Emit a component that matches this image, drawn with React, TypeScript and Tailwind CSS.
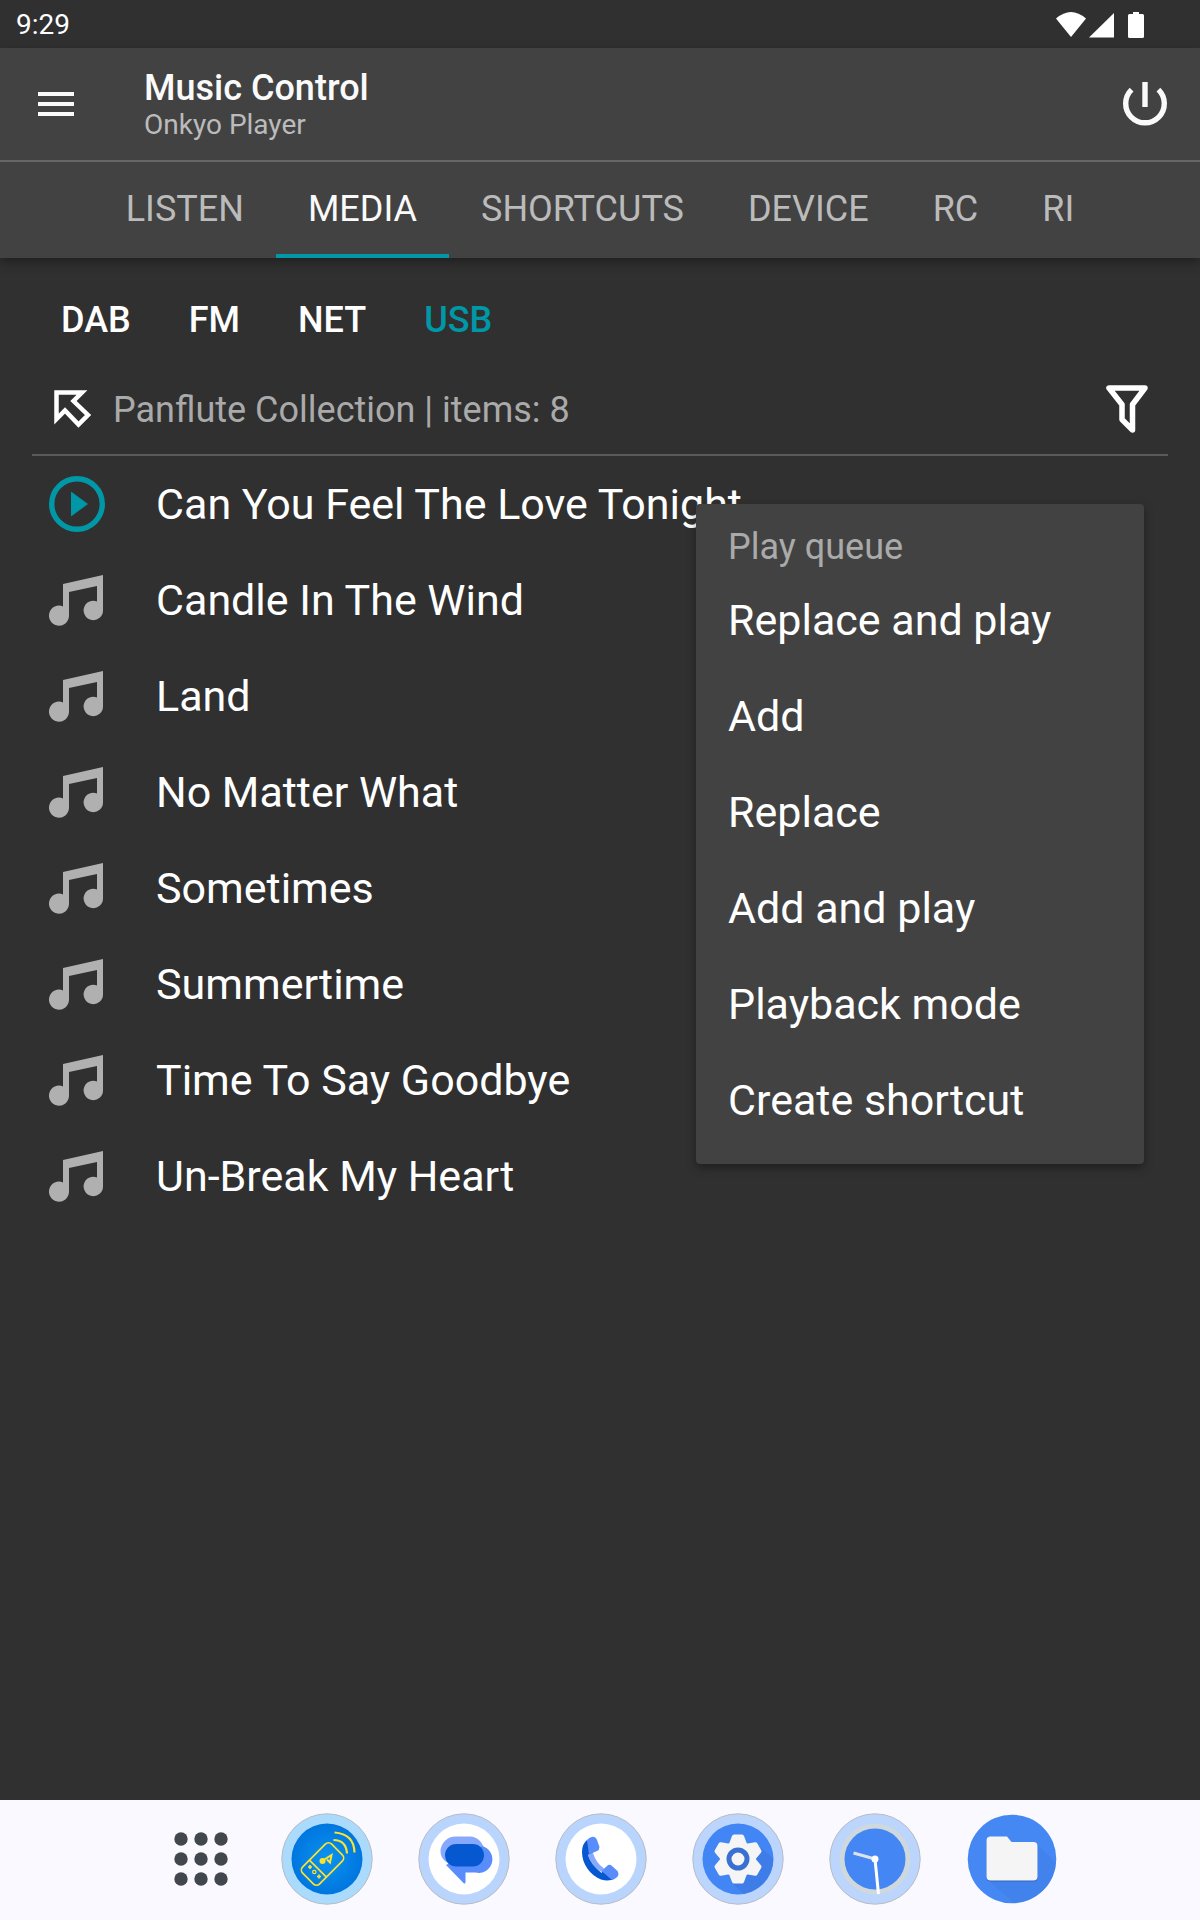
import React from "react";

const tabs = ["LISTEN", "MEDIA", "SHORTCUTS", "DEVICE", "RC", "RI"];
const sources = ["DAB", "FM", "NET", "USB"];
const songs = [
  "Can You Feel The Love Tonight",
  "Candle In The Wind",
  "Land",
  "No Matter What",
  "Sometimes",
  "Summertime",
  "Time To Say Goodbye",
  "Un-Break My Heart",
];
const actions = ["Replace and play", "Add", "Replace", "Add and play", "Playback mode", "Create shortcut"];

function StatusBar() {
  return (
    <div className="flex h-12 items-center justify-between pl-4 pr-14 pt-0.5 text-[28px] leading-8 text-white">
      <span>9:29</span>
      <svg width="88" height="26" viewBox="0 0 88 26" fill="#fff" aria-hidden="true">
        <path d="M0 6.500Q15-6.500 30 6.500L15 25Z" />
        <path d="M33 25.500L58 1V25.500Z" />
        <path d="M77 0h6v2h3.500a1.500 1.500 0 0 1 1.500 1.500V24.500a1.500 1.500 0 0 1-1.500 1.500h-13a1.500 1.500 0 0 1-1.500-1.500V3.500a1.500 1.500 0 0 1 1.500-1.500H77Z" />
      </svg>
    </div>
  );
}

function AppBar() {
  return (
    <div className="flex h-[114px] items-center border-b-2 border-[#666] px-8">
      <button aria-label="Menu" className="ml-1.5 mr-[70px]">
        <svg width="36" height="24" viewBox="0 0 36 24" fill="#fafafa">
          <path d="M0 0h36v4H0zM0 10h36v4H0zM0 20h36v4H0z" />
        </svg>
      </button>
      <div className="flex-1 pt-0.5">
        <h1 className="text-[36px] font-medium leading-10 text-[#fafafa]">Music Control</h1>
        <p className="text-[28px] leading-[34px] text-[#bbb]">Onkyo Player</p>
      </div>
      <button aria-label="Power">
        <svg width="46" height="46" viewBox="0 0 46 46" fill="none" stroke="#fafafa" strokeWidth="5.400">
          <path d="M23 1V26M9.600 8.600a19.300 19.300 0 1 0 26.800 0" />
        </svg>
      </button>
    </div>
  );
}

function MusicNote() {
  return (
    <svg width="56" height="52" viewBox="0 0 56 52" fill="#b0b0b0" aria-hidden="true">
      <path d="M14 10L54 1V36.500A9.700 9.700 0 1 1 48 27.500V12L20 18V42A10 10 0 1 1 14 32.500Z" />
    </svg>
  );
}

function PlayMark() {
  return (
    <svg width="56" height="56" viewBox="0 0 56 56" aria-hidden="true">
      <circle cx="28" cy="28" r="25.300" fill="none" stroke="#0097a7" strokeWidth="5.400" />
      <path d="M22 15.500L39 28 22 40.500Z" fill="#0097a7" />
    </svg>
  );
}

function ActionMenu() {
  return (
    <div role="menu" className="absolute right-6 top-12 w-[448px] rounded bg-[#424242] py-4 shadow-[0_4px_10px_rgba(0,0,0,0.35)]">
      <div className="px-8 pt-0.5 text-[36px] leading-[50px] text-[#aaa]">Play queue</div>
      {actions.map((a) => (
        <button key={a} role="menuitem" className="block h-24 w-full px-8 text-left text-[43px] text-white">
          {a}
        </button>
      ))}
    </div>
  );
}

function Disc({ ring, children }: { ring: string; children: React.ReactNode }) {
  return (
    <svg width="92" height="92" viewBox="0 0 92 92" aria-hidden="true">
      <circle cx="46" cy="46" r="45.200" fill={ring} stroke="#b9bcc4" strokeWidth="1" />
      {children}
    </svg>
  );
}

function RemoteIcon() {
  return (
    <Disc ring="#aadafc">
      <defs>
        <radialGradient id="remote">
          <stop offset="0" stopColor="#0a93f2" />
          <stop offset="1" stopColor="#0076de" />
        </radialGradient>
      </defs>
      <circle cx="46" cy="46" r="35.500" fill="url(#remote)" />
      <g fill="none" stroke="#fde32c" strokeWidth="1.700">
        <g transform="rotate(45 41.500 51)">
          <rect x="29.500" y="30.500" width="24" height="41" rx="4.500" />
          <path d="M29.500 57.500h24" />
        </g>
        <path d="M52.500 27Q65 27 66 40.500M53.500 19.500Q73 21 73.500 39.500" strokeWidth="2.200" />
        <path d="M41 48L50.500 42L49 49.500L46 46.500" strokeWidth="2" />
        <path d="M27 54h4M29 52v4M36 63.500h4M38 61.500v4" strokeWidth="1.700" />
        <circle cx="33.300" cy="59" r="1.700" strokeWidth="1.200" />
      </g>
      <circle cx="41.500" cy="48" r="3" fill="#fde32c" />
    </Disc>
  );
}

function MessagesIcon() {
  return (
    <Disc ring="#b9d5fd">
      <circle cx="46" cy="46" r="35.500" fill="#fff" />
      <path d="M37.500 23.500H52A14.500 14.500 0 0 1 66 38V42L56 53H34L27 48Q22.500 44 22.500 38.500A15 15 0 0 1 37.500 23.500Z" fill="#87a9fd" />
      <path d="M64 33A13.500 13.500 0 0 1 57.500 59.500H47.500V69Q47.500 71.500 45.500 70L28 52Z" fill="#598dfc" />
      <rect x="27" y="31" width="39" height="22.500" rx="11.250" fill="#0558cf" />
    </Disc>
  );
}

function PhoneIcon() {
  return (
    <Disc ring="#b9d5fd">
      <circle cx="46" cy="46" r="35.500" fill="#fff" />
      <path d="M32 27L38 40L33 42Q36 51 46.500 60L49 56L60 65.500Q54 69 46 66.500C35 62 27 51 27 39Q27 31 32 27Z" fill="#0558cf" />
      <path d="M33 42Q36 53 46.500 59L49 55.500Q41 50 38 40Z" fill="#87a9fd" />
      <path d="M32 27Q39 20.500 42 27L44.500 34Q44.500 37 42 38L34 41.500Z" fill="#598dfc" />
      <path d="M46.500 58L52 53Q54.500 50.500 57 53L62.500 58Q65 62 61 65L57 67Z" fill="#598dfc" />
    </Disc>
  );
}

function SettingsIcon() {
  return (
    <Disc ring="#bcd5fd">
      <circle cx="46" cy="46" r="35.500" fill="#4285f4" />
      <path d="M69 35L81 45A35.500 35.500 0 0 1 52 81L39 69Z" fill="#3c78df" opacity=".6" />
      <g fill="#f5f5f5">
        <circle cx="46" cy="46" r="18" />
        {[0, 60, 120, 180, 240, 300].map((a) => (
          <path key={a} transform={`rotate(${a} 46 46)`} d="M37 31L40 23Q40.500 21.500 42 21.500H50Q51.500 21.500 52 23L55 31Z" />
        ))}
      </g>
      <circle cx="46" cy="46" r="9" fill="#f5f5f5" stroke="#3a70d2" strokeWidth="5" />
    </Disc>
  );
}

function ClockIcon() {
  return (
    <Disc ring="#bcd5fd">
      <circle cx="46" cy="46" r="35.500" fill="#cfd8dc" />
      <circle cx="46" cy="46" r="30.500" fill="#4386f4" />
      <path d="M46 46L24.500 40" stroke="#dde2e6" strokeWidth="3" />
      <path d="M46 46L49.500 81" stroke="#fff" strokeWidth="3" />
      <circle cx="46" cy="46" r="3.500" fill="#fff" />
    </Disc>
  );
}

function FilesIcon() {
  return (
    <svg width="92" height="92" viewBox="0 0 92 92" aria-hidden="true">
      <circle cx="46" cy="46" r="44.300" fill="#4688f3" />
      <path d="M71 31L90 50A44.300 44.300 0 0 1 48 90L22 67Z" fill="#3f7ee8" opacity=".6" />
      <path d="M24 24H41L45.500 29.500H67.500A4 4 0 0 1 71.500 33.500V64.500A4 4 0 0 1 67.500 68.500H24.500A4 4 0 0 1 20.500 64.500V28A4 4 0 0 1 24 24Z" fill="#2f62bd" />
      <path d="M24 23.500H41L45.500 29H67.500A4 4 0 0 1 71.500 33V63.500A4 4 0 0 1 67.500 67.500H24.500A4 4 0 0 1 20.500 63.500V27.500A4 4 0 0 1 24 23.500Z" fill="#f5f5f5" />
    </svg>
  );
}

const dock: [string, () => React.ReactElement][] = [
  ["Remote", RemoteIcon],
  ["Messages", MessagesIcon],
  ["Phone", PhoneIcon],
  ["Settings", SettingsIcon],
  ["Clock", ClockIcon],
  ["Files", FilesIcon],
];

function Dock() {
  return (
    <nav className="flex h-[120px] items-center justify-center gap-[45px] bg-[#faf9ff] pb-0.5">
      <button aria-label="All apps" className="flex w-[94px] justify-end pr-2">
        <svg width="54" height="54" viewBox="0 0 54 54" fill="#42474e">
          {[7, 27, 47].map((y) => [7, 27, 47].map((x) => <circle key={`${x}-${y}`} cx={x} cy={y} r="6.700" />))}
        </svg>
      </button>
      {dock.map(([name, Icon]) => (
        <button key={name} aria-label={name}>
          <Icon />
        </button>
      ))}
    </nav>
  );
}

export default function App() {
  return (
    <div className="flex min-h-screen flex-col bg-[#303030] font-[Roboto,sans-serif]">
      <StatusBar />
      <header className="bg-[#424242] shadow-[0_4px_10px_rgba(0,0,0,0.35)]">
        <AppBar />
        <div role="tablist" className="flex h-24 justify-center">
          {tabs.map((t) => (
            <button
              key={t}
              role="tab"
              aria-selected={t === "MEDIA"}
              className={
                t === "MEDIA"
                  ? "border-b-4 border-[#0097a7] px-8 pt-0.5 text-[36px] text-[#fafafa]"
                  : "border-b-4 border-transparent px-8 pt-0.5 text-[36px] text-[#bbb]"
              }
            >
              {t}
            </button>
          ))}
        </div>
      </header>
      <main className="flex-1 px-8">
        <div className="flex h-[106px] items-center gap-[58px] px-[29px] pt-[18px]">
          {sources.map((s) => (
            <button
              key={s}
              className={s === "USB" ? "text-[36px] font-medium text-[#0097a7]" : "text-[36px] font-medium text-white"}
            >
              {s}
            </button>
          ))}
        </div>
        <div className="flex h-[92px] items-center border-b-2 border-[#5a5a5a] pl-[22px] pr-5">
          <button aria-label="Up one level">
            <svg width="38" height="38" viewBox="0 0 38 38" fill="none" stroke="#fff" strokeWidth="4.500">
              <path d="M2.500 2.500H28L19.500 11L34 25L24.500 34.500L11 20.500L2.500 29Z" />
            </svg>
          </button>
          <span className="ml-[21px] flex-1 pt-0.5 text-[36px] text-[#aaa]">Panflute Collection | items: 8</span>
          <button aria-label="Filter">
            <svg width="42" height="48" viewBox="0 0 42 48" fill="none" stroke="#fff" strokeWidth="5.500" strokeLinejoin="round">
              <path d="M3 3H39L26.500 19.500V45L16 34.500V19.500Z" />
            </svg>
          </button>
        </div>
        <div className="relative">
          <ul>
            {songs.map((s, i) => (
              <li key={s}>
                <button className="flex h-24 w-full items-center gap-[51px] pl-[17px] text-left text-[43px] text-white">
                  {i === 0 ? <PlayMark /> : <MusicNote />}
                  <span>{s}</span>
                </button>
              </li>
            ))}
          </ul>
          <ActionMenu />
        </div>
      </main>
      <Dock />
    </div>
  );
}
